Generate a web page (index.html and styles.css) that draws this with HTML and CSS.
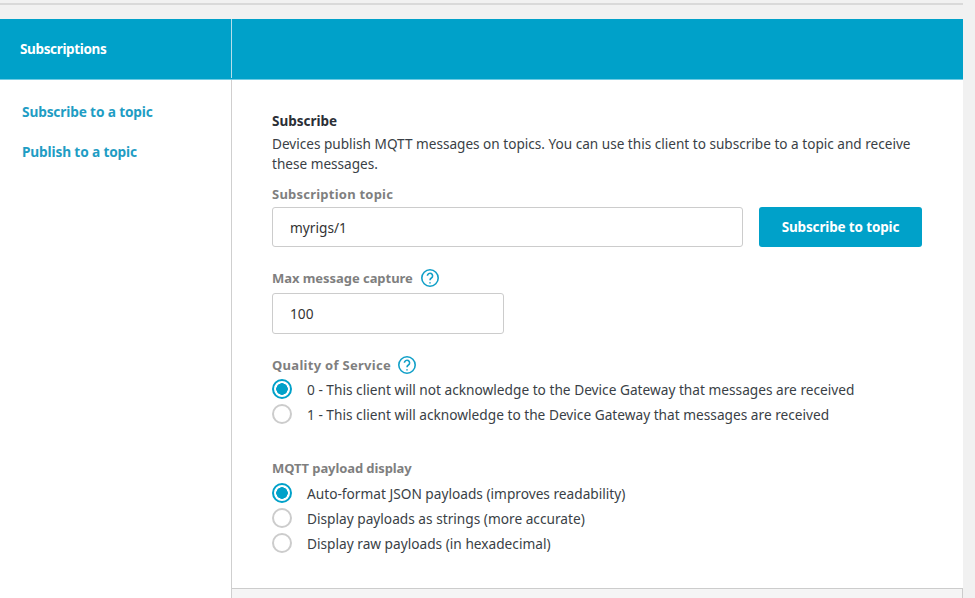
FILE: index.html
```html
<!DOCTYPE html>
<html lang="en">
<head>
<meta charset="utf-8">
<title>Subscriptions</title>
<link rel="stylesheet" href="styles.css">
</head>
<body>
<div class="top-rule"></div>
<div class="panel">
  <header class="bar">
    <div class="bar-title">Subscriptions</div>
    <div class="bar-rest"></div>
  </header>
  <div class="columns">
    <nav class="side">
      <a class="side-link">Subscribe to a topic</a>
      <a class="side-link">Publish to a topic</a>
    </nav>
    <div class="main">
      <main class="form">
        <h2 class="heading">Subscribe</h2>
        <p class="intro">Devices publish MQTT messages on topics. You can use this client to subscribe to a topic and receive these messages.</p>
        <div class="label label-topic">Subscription topic</div>
        <div class="topic-row">
          <div class="input input-topic">myrigs/1</div>
          <button class="btn">Subscribe to topic</button>
        </div>
        <div class="label label-max">Max message capture
          <svg class="help" viewBox="0 0 20 20"><circle cx="10" cy="10" r="8.2"/><path d="M7.4 7.8a2.6 2.6 0 1 1 4 2.2c-.9.6-1.4 1-1.4 2.2"/><path class="dot" d="M10 14.2v1.4"/></svg>
        </div>
        <div class="input input-max">100</div>
        <div class="label label-qos">Quality of Service
          <svg class="help" viewBox="0 0 20 20"><circle cx="10" cy="10" r="8.2"/><path d="M7.4 7.8a2.6 2.6 0 1 1 4 2.2c-.9.6-1.4 1-1.4 2.2"/><path class="dot" d="M10 14.2v1.4"/></svg>
        </div>
        <div class="radios radios-qos">
          <div class="radio-row"><span class="radio on"></span><span>0 - This client will not acknowledge to the Device Gateway that messages are received</span></div>
          <div class="radio-row"><span class="radio"></span><span>1 - This client will acknowledge to the Device Gateway that messages are received</span></div>
        </div>
        <div class="label label-payload">MQTT payload display</div>
        <div class="radios radios-payload">
          <div class="radio-row"><span class="radio on"></span><span>Auto-format JSON payloads (improves readability)</span></div>
          <div class="radio-row"><span class="radio"></span><span>Display payloads as strings (more accurate)</span></div>
          <div class="radio-row"><span class="radio"></span><span>Display raw payloads (in hexadecimal)</span></div>
        </div>
      </main>
      <div class="foot"></div>
    </div>
  </div>
</div>
</body>
</html>
```
FILE: styles.css
```css
* { box-sizing: border-box; }
html, body { margin: 0; height: 598px; overflow: hidden; }
body {
  background: #f1f1f1;
  font-family: "Noto Sans", "Open Sans", sans-serif;
  font-size: 13.7px;
  color: #3a3f46;
  padding-top: 3px;
}
.top-rule { height: 2px; width: 963px; background: #d9d9d9; }
.panel { width: 963px; margin-top: 14px; background: #fff; height: 579px; display: flex; flex-direction: column; }
.bar { height: 61px; flex: none; display: flex; background: #00a1c9; border-bottom: 1px solid #6fcbe3; }
.bar-title { width: 232px; border-right: 1px solid #b5dfeb; padding: 21px 0 0 20px; height: 59px; color: #fff; font-weight: 700; font-size: 13.5px; line-height: 18px; letter-spacing: -0.35px; }
.bar-rest { flex: 1; }
.columns { flex: 1; display: flex; min-height: 0; }
.side { width: 232px; flex: none; padding-top: 23px; display: flex; flex-direction: column; gap: 22px; border-right: 1px solid #cfcfcf; }
.side-link { color: #1f9dc4; font-weight: 700; font-size: 13.7px; line-height: 18px; padding-left: 22px; letter-spacing: -0.15px; }
.main { flex: 1; display: flex; flex-direction: column; min-width: 0; }
.form { flex: 1; padding: 33px 0 0 40px; }
.heading { margin: 0; font-size: 13.5px; font-weight: 700; line-height: 17px; color: #2b2f36; }
.intro { margin: 4px 0 0; width: 650px; line-height: 20px; font-size: 13.6px; }
.label { color: #7f7f7f; font-weight: 700; font-size: 13px; line-height: 18px; display: flex; align-items: center; gap: 7px; letter-spacing: -0.1px; }
.label-topic { margin-top: 11px; letter-spacing: 0.23px; }
.topic-row { display: flex; gap: 16px; margin-top: 4px; }
.input { height: 40px; border: 1px solid #ccc; border-radius: 3px; padding-left: 17px; line-height: 39px; background: #fff; color: #333; font-size: 13.7px; }
.input-topic { width: 471px; }
.input-max { width: 232px; margin-top: 5px; height: 41px; line-height: 40px; }
.btn { width: 163px; height: 40px; border: 0; border-radius: 3px; background: #00a1c9; color: #fff; font: 700 13.5px/18px "Noto Sans", sans-serif; letter-spacing: -0.15px; padding: 0; }
.label-max { margin-top: 21px; letter-spacing: -0.05px; }
.label-qos { margin-top: 21px; letter-spacing: 0.29px; gap: 6px; }
.help { width: 20px; height: 20px; fill: none; stroke: #12a0c8; stroke-width: 1.6; flex: none; }
.radios { display: flex; flex-direction: column; gap: 5px; }
.radios-qos { margin-top: 4px; }
.radios-payload { margin-top: 6px; }
.radio-row { display: flex; align-items: center; gap: 15px; height: 20px; }
.radio { width: 20px; height: 20px; border-radius: 50%; border: 2px solid #ccc; background: #fff; flex: none; }
.radio.on { border-color: #00a1c9; background: radial-gradient(circle, #00a1c9 0 5.5px, #fff 6px); }
.label-payload { margin-top: 35px; }
.foot { height: 10px; flex: none; background: #f5f5f5; border-top: 1px solid #ccc; border-right: 1px solid #ccc; }
```
